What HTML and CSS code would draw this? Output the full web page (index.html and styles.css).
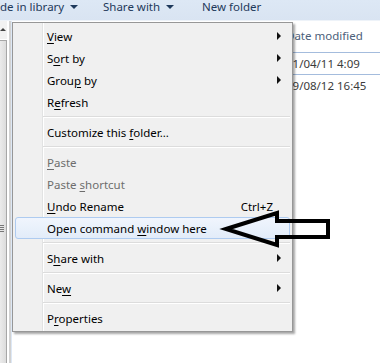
FILE: index.html
```html
<!DOCTYPE html>
<html lang="en">
<head>
    <meta charset="UTF-8">
    <title>Explorer context menu</title>
    <link rel="stylesheet" href="styles.css">
</head>
<body>
    <div class="window">
        <div class="toolbar">
            <span class="tb-btn tb-lib">de in library<i class="caret"></i></span>
            <span class="tb-btn tb-share">Share with<i class="caret"></i></span>
            <span class="tb-btn">New folder</span>
        </div>

        <div class="main">
            <div class="nav">
                <div class="scroll">
                    <div class="scroll-up"><i class="up"></i></div>
                    <div class="thumb"><span class="grip"></span></div>
                </div>
            </div>
            <div class="files">
                <div class="col-head">Date modified</div>
                <div class="row row-focus">11/04/11 4:09</div>
                <div class="row">29/08/12 16:45</div>
            </div>
        </div>

        <!-- context menu -->
        <ul class="menu">
            <li class="item"><span class="label"><u>V</u>iew</span><i class="more"></i></li>
            <li class="item"><span class="label">S<u>o</u>rt by</span><i class="more"></i></li>
            <li class="item"><span class="label">Grou<u>p</u> by</span><i class="more"></i></li>
            <li class="item"><span class="label">R<u>e</u>fresh</span></li>
            <li class="sep"></li>
            <li class="item"><span class="label">Customize this <u>f</u>older...</span></li>
            <li class="sep"></li>
            <li class="item off"><span class="label"><u>P</u>aste</span></li>
            <li class="item off"><span class="label">Paste <u>s</u>hortcut</span></li>
            <li class="item"><span class="label"><u>U</u>ndo Rename</span><span class="key">Ctrl+Z</span></li>
            <li class="item hot"><span class="label">Open command <u>w</u>indow here</span></li>
            <li class="sep"></li>
            <li class="item"><span class="label">S<u>h</u>are with</span><i class="more"></i></li>
            <li class="sep"></li>
            <li class="item"><span class="label">Ne<u>w</u></span><i class="more"></i></li>
            <li class="sep"></li>
            <li class="item"><span class="label">P<u>r</u>operties</span></li>
        </ul>

        <!-- hand drawn arrow pointing at the highlighted entry -->
        <svg class="pointer" width="380" height="363" viewBox="0 0 380 363">
            <polygon points="226,229 277,213 277,221 328,221 328,237 277,237 277,245"
                     fill="none" stroke="#000" stroke-width="4" stroke-linejoin="miter"/>
        </svg>
    </div>
</body>
</html>
```

FILE: styles.css
```css
body {
    margin: 0;
    background: #fff;
    font-family: "Noto Sans", "Open Sans", sans-serif;
    font-size: 11.5px;
}
.window {
    position: relative;
    width: 380px;
    height: 363px;
    overflow: hidden;
}

/* command bar */
.toolbar {
    height: 20px;
    border-bottom: 1px solid #eef3f9;
    background: linear-gradient(#dde8f5, #d9e4f2);
    color: #1e395b;
    display: flex;
    line-height: 13px;
}
.tb-btn {
    display: flex;
    align-items: center;
    gap: 6px;
    height: 13px;
}
.tb-lib { width: 103px; }
.tb-share { width: 99px; }
.caret {
    width: 0;
    height: 0;
    border-left: 4px solid transparent;
    border-right: 4px solid transparent;
    border-top: 4px solid #1e395b;
}

.main {
    display: flex;
    height: 342px;
}

/* navigation pane edge */
.nav {
    width: 9px;
    border-right: 2px solid #d2d2d2;
    box-shadow: 1px 0 0 #dde8f6;
    margin-right: 1px;
}
.scroll {
    width: 7px;
    height: 100%;
    border-right: 1px solid #fff;
    display: flex;
    flex-direction: column;
}
.scroll-up {
    height: 18px;
    background: #f2f2f2;
    display: flex;
    padding-top: 7px;
    box-sizing: border-box;
}
.up {
    width: 0;
    height: 0;
    border-left: 3px solid transparent;
    border-right: 3px solid transparent;
    border-bottom: 3px solid #444;
}
.thumb {
    flex: 1;
    border-top: 1px solid #a7a7a7;
    border-right: 1px solid #a7a7a7;
    background: linear-gradient(to right, #ebebeb, #dcdcdc);
    margin-top: 1px;
}
.grip {
    display: block;
    width: 4px;
    height: 7px;
    margin-top: 184px;
    background: repeating-linear-gradient(#777 0 1px, transparent 1px 2px);
}

/* details view */
.files {
    flex: 1;
}
.col-head {
    height: 32px;
    box-sizing: border-box;
    padding: 7px 0 0 274px;
    line-height: 15px;
    color: #4c607a;
    border-bottom: 1px solid #a4bcdd;
}
.row {
    height: 21px;
    line-height: 21px;
    padding-left: 274px;
    color: #3b3b3b;
}
.row-focus {
    border-bottom: 1px solid #a4bcdd;
}

/* context menu */
.menu {
    position: absolute;
    left: 12px;
    top: 22px;
    width: 281px;
    box-sizing: border-box;
    margin: 0;
    padding: 2px;
    list-style: none;
    border: 1px solid #979797;
    background: linear-gradient(to right, transparent 29px, #e2e3e3 29px, #e2e3e3 30px, #fff 30px, #fff 31px, transparent 31px), #f0f0f0;
    box-shadow: 2px 2px 2px rgba(0, 0, 0, 0.35);
    color: #000;
}
.item {
    height: 22px;
    box-sizing: border-box;
    display: flex;
    align-items: center;
    padding: 0 8px 0 31px;
    border: 1px solid transparent;
    border-radius: 3px;
}
.label {
    flex: 1;
}
.key {
    margin-right: 8px;
}
.more {
    width: 0;
    height: 0;
    border-top: 4px solid transparent;
    border-bottom: 4px solid transparent;
    border-left: 4px solid #111;
}
.off { color: #6d6d6d; }
.hot {
    border-color: #aecbf0;
    background: linear-gradient(#f0f5fd, #e2ecf9);
}
.sep {
    height: 8px;
    margin-left: 28px;
    background: linear-gradient(transparent 3px, #dcdcdc 3px, #dcdcdc 4px, #fff 4px, #fff 5px, transparent 5px);
}
u {
    text-decoration-thickness: 1px;
    text-underline-offset: 2px;
}

.pointer {
    position: absolute;
    left: 0;
    top: 0;
    pointer-events: none;
}
```
